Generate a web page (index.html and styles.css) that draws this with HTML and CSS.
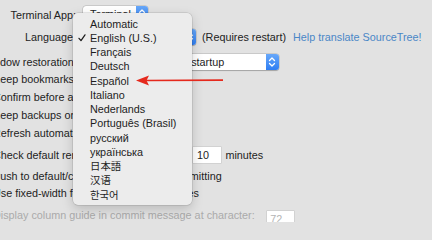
FILE: index.html
```html
<!DOCTYPE html>
<html lang="en">
<head>
<meta charset="utf-8">
<title>Preferences</title>
<link rel="stylesheet" href="styles.css">
</head>
<body>
<div class="prefs">
  <div class="form-row r1">
    <span class="form-label">Terminal App:</span>
    <div class="popup popup-terminal"><span class="popup-text">Terminal</span><span class="stepper"><svg viewBox="0 0 12 16" width="12" height="16"><path d="M3.5 6.5 L6 4 L8.5 6.5 M3.5 9.5 L6 12 L8.5 9.5" fill="none" stroke="#fff" stroke-width="1.3" stroke-linecap="round" stroke-linejoin="round"/></svg></span></div>
  </div>
  <div class="form-row r2">
    <span class="form-label">Language:</span>
    <div class="popup popup-lang"><span class="popup-text">English (U.S.)</span><span class="stepper"><svg viewBox="0 0 12 16" width="12" height="16"><path d="M3.5 6.5 L6 4 L8.5 6.5 M3.5 9.5 L6 12 L8.5 9.5" fill="none" stroke="#fff" stroke-width="1.3" stroke-linecap="round" stroke-linejoin="round"/></svg></span></div>
    <span class="note">(Requires restart)</span>
    <a class="link" href="#">Help translate SourceTree!</a>
  </div>
  <div class="form-row r3">
    <span class="wide-label">Window restoration on startup:</span>
    <div class="popup popup-restore"><span class="popup-text">Restore at startup</span><span class="stepper"><svg viewBox="0 0 12 16" width="12" height="16"><path d="M3.5 6.5 L6 4 L8.5 6.5 M3.5 9.5 L6 12 L8.5 9.5" fill="none" stroke="#fff" stroke-width="1.3" stroke-linecap="round" stroke-linejoin="round"/></svg></span></div>
  </div>
  <div class="checks">
    <div class="check-row h18"><span class="box"></span><span>Keep bookmarks window open</span></div>
    <div class="check-row h18"><span class="box"></span><span>Confirm before amending commits</span></div>
    <div class="check-row h18"><span class="box"></span><span>Keep backups on discard</span></div>
    <div class="check-row h18"><span class="box"></span><span>Refresh automatically</span></div>
    <div class="check-row h26"><span class="box"></span><span>Check default remotes for updates every</span><span class="field field-minutes">10</span><span class="unit">minutes</span></div>
    <div class="check-row h16"><span class="box"></span><span>Push to default/current branch when committing</span></div>
    <div class="check-row h17"><span class="box"></span><span>Use fixed-width fonts for commit messages</span></div>
    <div class="check-row h26 disabled"><span class="box"></span><span>Display column guide in commit message at character:</span><span class="field field-col">72</span></div>
  </div>
</div>

<div class="menu">
  <div class="menu-item">Automatic</div>
  <div class="menu-item checked"><svg class="tick" viewBox="0 0 8 8" width="8" height="8"><path d="M1 4.3 L3 6.6 L7 0.8" fill="none" stroke="#1d1d1d" stroke-width="1.25" stroke-linecap="round" stroke-linejoin="round"/></svg>English (U.S.)</div>
  <div class="menu-item">Français</div>
  <div class="menu-item">Deutsch</div>
  <div class="menu-item">Español</div>
  <div class="menu-item">Italiano</div>
  <div class="menu-item">Nederlands</div>
  <div class="menu-item">Português (Brasil)</div>
  <div class="menu-item">русский</div>
  <div class="menu-item">українська</div>
  <div class="menu-item cjk" lang="ja">日本語</div>
  <div class="menu-item cjk" lang="zh-CN">汉语</div>
  <div class="menu-item cjk-kr" lang="ko">한국어</div>
</div>

<svg class="arrow" viewBox="0 0 88 11" width="88" height="11">
  <line x1="10" y1="5.5" x2="87" y2="5.2" stroke="#e5291d" stroke-width="1.7"/>
  <polygon points="0,5.6 13,0.6 10.5,5.5 13,10.6" fill="#e5291d"/>
</svg>
</body>
</html>
```
FILE: styles.css
```css
html, body {
  margin: 0;
  padding: 0;
  width: 432px;
  height: 222px;
  overflow: hidden;
  background: #e2e2e2;
}

body {
  position: relative;
  font-family: "Liberation Sans", Arial, sans-serif;
  font-size: 10.8px;
  color: #232323;
}

.prefs {
  padding-top: 5px;
  white-space: nowrap;
}

.form-row {
  display: flex;
  align-items: center;
  height: 17px;
}

.r2 { margin-top: 6px; }
.r3 { margin-top: 8px; }

.form-label {
  flex: none;
  width: 76px;
  margin-right: 7px;
  text-align: right;
  padding-top: 2px;
}

.r2 .form-label { padding-top: 1px; }

.wide-label {
  flex: none;
  width: 150px;
  margin-left: -18.6px;
  padding-top: 1px;
}

.popup {
  flex: none;
  display: flex;
  align-items: center;
  height: 16px;
  box-sizing: border-box;
  background: #fff;
  border-radius: 3px;
  box-shadow: 0 0 0 0.5px rgba(0, 0, 0, 0.18), 0 0.5px 1px rgba(0, 0, 0, 0.2);
  overflow: hidden;
}

.popup-text {
  flex: 1;
  padding-left: 7px;
  padding-top: 1px;
}

.stepper {
  flex: none;
  width: 12.5px;
  height: 100%;
  display: flex;
  align-items: center;
  justify-content: center;
  background: linear-gradient(#67a8fa, #2f7ef3);
}

.popup-terminal { width: 65px; }
.popup-lang { width: 113px; }
.popup-restore { width: 147.3px; }

.note {
  margin-left: 6px;
  padding-top: 1px;
}

.link {
  margin-left: 7px;
  padding-top: 1px;
  color: #4a87c7;
  text-decoration: none;
}

.checks {
  margin-left: -26px;
  margin-top: 0.3px;
}

.check-row {
  display: flex;
  align-items: center;
}

.h18 { height: 18px; }
.h26 { height: 26px; }
.h16 { height: 16px; }
.h17 { height: 17.4px; }

.box {
  flex: none;
  width: 12px;
  height: 12px;
  margin-right: 7px;
  box-sizing: border-box;
  background: #fff;
  border: 1px solid #b9b9b9;
  border-radius: 3px;
}

.field {
  flex: none;
  display: flex;
  align-items: center;
  height: 16px;
  box-sizing: border-box;
  padding-left: 3.5px;
  background: #fff;
  box-shadow: 0 0 0 0.5px rgba(0, 0, 0, 0.14);
}

.field-minutes {
  width: 27.5px;
  margin-left: 6px;
}

.unit { margin-left: 4.5px; }

.disabled { color: #aaaaaa; }

.field-col {
  width: 27px;
  margin-left: 12px;
  color: #b4b4b4;
  margin-top: 9px;
}

.menu {
  position: absolute;
  left: 73px;
  top: 13px;
  width: 119px;
  box-sizing: border-box;
  padding: 3.5px 0 3px;
  background: #ececec;
  border-radius: 5px;
  box-shadow: 0 0 0 0.5px rgba(0, 0, 0, 0.16), 0 4px 12px rgba(0, 0, 0, 0.18);
  color: #1d1d1d;
}

.menu-item {
  position: relative;
  height: 14.27px;
  line-height: 14.27px;
  padding-left: 17px;
  white-space: nowrap;
}

.tick {
  position: absolute;
  left: 4.5px;
  top: 3.5px;
}

.cjk {
  font-family: "Noto Sans CJK JP", "Noto Sans CJK SC", sans-serif;
  font-size: 10.4px;
}

.cjk-kr {
  font-family: "Noto Sans CJK KR", sans-serif;
  font-size: 10.4px;
}

.arrow {
  position: absolute;
  left: 136px;
  top: 75px;
}
```
